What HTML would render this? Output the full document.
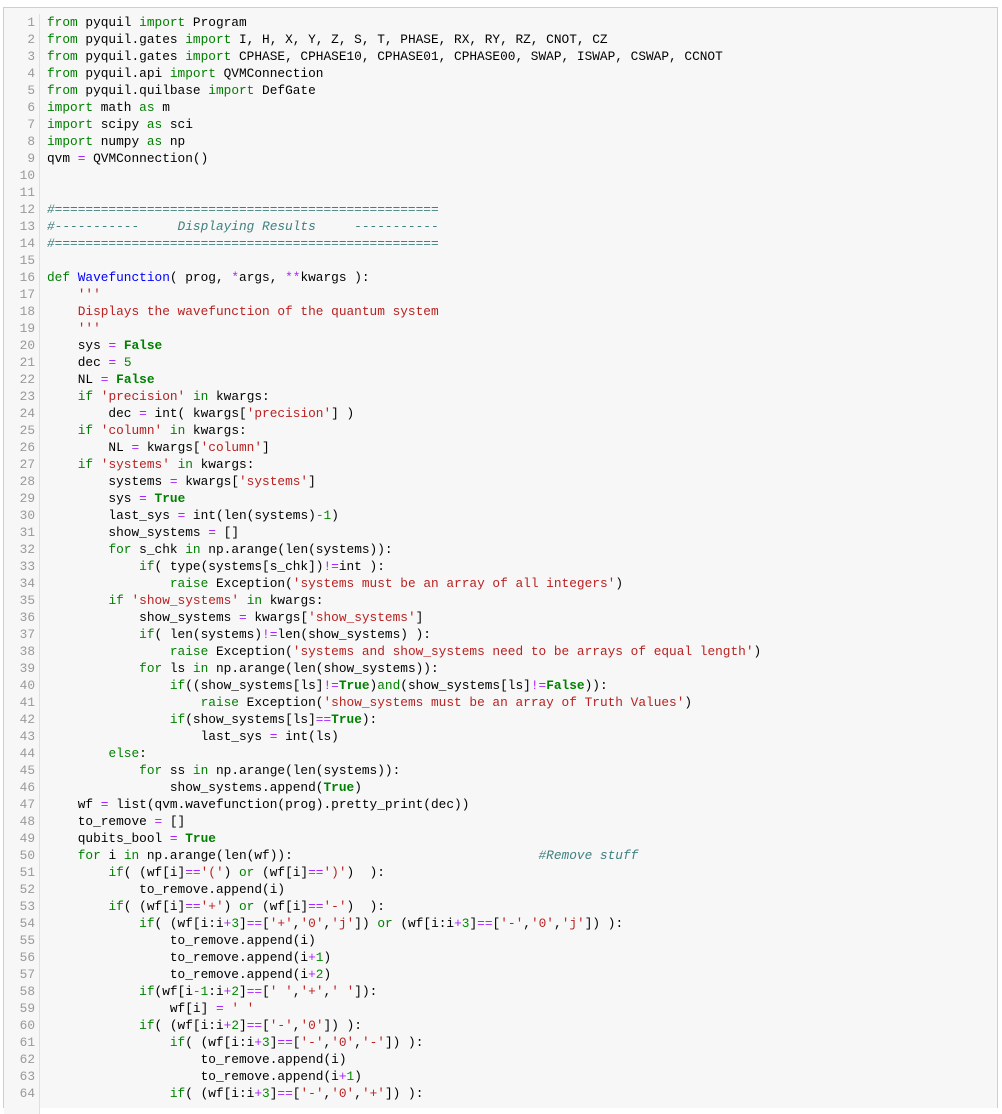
<!DOCTYPE html>
<html><head><meta charset="utf-8"><style>
html,body{margin:0;padding:0;background:#fff;}
body{width:1002px;height:1103px;overflow:hidden;position:relative;}
.box{position:absolute;left:3px;top:7px;width:993px;height:1100px;background:#f7f7f7;border:1px solid #cfcfcf;border-bottom:none;}
.gut{position:absolute;left:0;top:6px;width:35px;border-right:1px solid #e0e0e0;height:1100px;background:#f7f7f7;}
.ln{position:absolute;left:0;top:6px;width:31px;text-align:right;color:#999;}
.code{position:absolute;left:43px;top:6px;color:#000;}
.ln div,.code div{height:17px;line-height:17px;white-space:pre;font-family:"Liberation Mono",monospace;font-size:12.8px;}
.k{color:#008000}
.b{color:#008000;font-weight:bold}
.o{color:#aa22ff}
.s{color:#ba2121}
.n{color:#008800}
.c{color:#408080;font-style:italic}
.f{color:#0000ff}
</style></head><body>
<div class="box">
<div class="gut"></div>
<div class="ln">
<div>1</div><div>2</div><div>3</div><div>4</div><div>5</div><div>6</div><div>7</div><div>8</div><div>9</div><div>10</div>
<div>11</div><div>12</div><div>13</div><div>14</div><div>15</div><div>16</div><div>17</div><div>18</div><div>19</div><div>20</div>
<div>21</div><div>22</div><div>23</div><div>24</div><div>25</div><div>26</div><div>27</div><div>28</div><div>29</div><div>30</div>
<div>31</div><div>32</div><div>33</div><div>34</div><div>35</div><div>36</div><div>37</div><div>38</div><div>39</div><div>40</div>
<div>41</div><div>42</div><div>43</div><div>44</div><div>45</div><div>46</div><div>47</div><div>48</div><div>49</div><div>50</div>
<div>51</div><div>52</div><div>53</div><div>54</div><div>55</div><div>56</div><div>57</div><div>58</div><div>59</div><div>60</div>
<div>61</div><div>62</div><div>63</div><div>64</div>
</div>
<div class="code">
<div><span class="k">from</span> pyquil <span class="k">import</span> Program</div>
<div><span class="k">from</span> pyquil.gates <span class="k">import</span> I, H, X, Y, Z, S, T, PHASE, RX, RY, RZ, CNOT, CZ</div>
<div><span class="k">from</span> pyquil.gates <span class="k">import</span> CPHASE, CPHASE10, CPHASE01, CPHASE00, SWAP, ISWAP, CSWAP, CCNOT</div>
<div><span class="k">from</span> pyquil.api <span class="k">import</span> QVMConnection</div>
<div><span class="k">from</span> pyquil.quilbase <span class="k">import</span> DefGate</div>
<div><span class="k">import</span> math <span class="k">as</span> m</div>
<div><span class="k">import</span> scipy <span class="k">as</span> sci</div>
<div><span class="k">import</span> numpy <span class="k">as</span> np</div>
<div>qvm <span class="o">=</span> QVMConnection()</div>
<div> </div>
<div> </div>
<div><span class="c">#==================================================</span></div>
<div><span class="c">#-----------     Displaying Results     -----------</span></div>
<div><span class="c">#==================================================</span></div>
<div> </div>
<div><span class="k">def</span> <span class="f">Wavefunction</span>( prog, <span class="o">*</span>args, <span class="o">**</span>kwargs ):</div>
<div>    <span class="s">'''</span></div>
<div><span class="s">    Displays the wavefunction of the quantum system</span></div>
<div>    <span class="s">'''</span></div>
<div>    sys <span class="o">=</span> <span class="b">False</span></div>
<div>    dec <span class="o">=</span> <span class="n">5</span></div>
<div>    NL <span class="o">=</span> <span class="b">False</span></div>
<div>    <span class="k">if</span> <span class="s">'precision'</span> <span class="k">in</span> kwargs:</div>
<div>        dec <span class="o">=</span> int( kwargs[<span class="s">'precision'</span>] )</div>
<div>    <span class="k">if</span> <span class="s">'column'</span> <span class="k">in</span> kwargs:</div>
<div>        NL <span class="o">=</span> kwargs[<span class="s">'column'</span>]</div>
<div>    <span class="k">if</span> <span class="s">'systems'</span> <span class="k">in</span> kwargs:</div>
<div>        systems <span class="o">=</span> kwargs[<span class="s">'systems'</span>]</div>
<div>        sys <span class="o">=</span> <span class="b">True</span></div>
<div>        last_sys <span class="o">=</span> int(len(systems)<span class="o">-</span><span class="n">1</span>)</div>
<div>        show_systems <span class="o">=</span> []</div>
<div>        <span class="k">for</span> s_chk <span class="k">in</span> np.arange(len(systems)):</div>
<div>            <span class="k">if</span>( type(systems[s_chk])<span class="o">!=</span>int ):</div>
<div>                <span class="k">raise</span> Exception(<span class="s">'systems must be an array of all integers'</span>)</div>
<div>        <span class="k">if</span> <span class="s">'show_systems'</span> <span class="k">in</span> kwargs:</div>
<div>            show_systems <span class="o">=</span> kwargs[<span class="s">'show_systems'</span>]</div>
<div>            <span class="k">if</span>( len(systems)<span class="o">!=</span>len(show_systems) ):</div>
<div>                <span class="k">raise</span> Exception(<span class="s">'systems and show_systems need to be arrays of equal length'</span>)</div>
<div>            <span class="k">for</span> ls <span class="k">in</span> np.arange(len(show_systems)):</div>
<div>                <span class="k">if</span>((show_systems[ls]<span class="o">!=</span><span class="b">True</span>)<span class="k">and</span>(show_systems[ls]<span class="o">!=</span><span class="b">False</span>)):</div>
<div>                    <span class="k">raise</span> Exception(<span class="s">'show_systems must be an array of Truth Values'</span>)</div>
<div>                <span class="k">if</span>(show_systems[ls]<span class="o">==</span><span class="b">True</span>):</div>
<div>                    last_sys <span class="o">=</span> int(ls)</div>
<div>        <span class="k">else</span>:</div>
<div>            <span class="k">for</span> ss <span class="k">in</span> np.arange(len(systems)):</div>
<div>                show_systems.append(<span class="b">True</span>)</div>
<div>    wf <span class="o">=</span> list(qvm.wavefunction(prog).pretty_print(dec))</div>
<div>    to_remove <span class="o">=</span> []</div>
<div>    qubits_bool <span class="o">=</span> <span class="b">True</span></div>
<div>    <span class="k">for</span> i <span class="k">in</span> np.arange(len(wf)):                                <span class="c">#Remove stuff</span></div>
<div>        <span class="k">if</span>( (wf[i]<span class="o">==</span><span class="s">'('</span>) <span class="k">or</span> (wf[i]<span class="o">==</span><span class="s">')'</span>)  ):</div>
<div>            to_remove.append(i)</div>
<div>        <span class="k">if</span>( (wf[i]<span class="o">==</span><span class="s">'+'</span>) <span class="k">or</span> (wf[i]<span class="o">==</span><span class="s">'-'</span>)  ):</div>
<div>            <span class="k">if</span>( (wf[i:i<span class="o">+</span><span class="n">3</span>]<span class="o">==</span>[<span class="s">'+'</span>,<span class="s">'0'</span>,<span class="s">'j'</span>]) <span class="k">or</span> (wf[i:i<span class="o">+</span><span class="n">3</span>]<span class="o">==</span>[<span class="s">'-'</span>,<span class="s">'0'</span>,<span class="s">'j'</span>]) ):</div>
<div>                to_remove.append(i)</div>
<div>                to_remove.append(i<span class="o">+</span><span class="n">1</span>)</div>
<div>                to_remove.append(i<span class="o">+</span><span class="n">2</span>)</div>
<div>            <span class="k">if</span>(wf[i<span class="o">-</span><span class="n">1</span>:i<span class="o">+</span><span class="n">2</span>]<span class="o">==</span>[<span class="s">' '</span>,<span class="s">'+'</span>,<span class="s">' '</span>]):</div>
<div>                wf[i] <span class="o">=</span> <span class="s">' '</span></div>
<div>            <span class="k">if</span>( (wf[i:i<span class="o">+</span><span class="n">2</span>]<span class="o">==</span>[<span class="s">'-'</span>,<span class="s">'0'</span>]) ):</div>
<div>                <span class="k">if</span>( (wf[i:i<span class="o">+</span><span class="n">3</span>]<span class="o">==</span>[<span class="s">'-'</span>,<span class="s">'0'</span>,<span class="s">'-'</span>]) ):</div>
<div>                    to_remove.append(i)</div>
<div>                    to_remove.append(i<span class="o">+</span><span class="n">1</span>)</div>
<div>                <span class="k">if</span>( (wf[i:i<span class="o">+</span><span class="n">3</span>]<span class="o">==</span>[<span class="s">'-'</span>,<span class="s">'0'</span>,<span class="s">'+'</span>]) ):</div>
</div>
</div>
</body></html>
